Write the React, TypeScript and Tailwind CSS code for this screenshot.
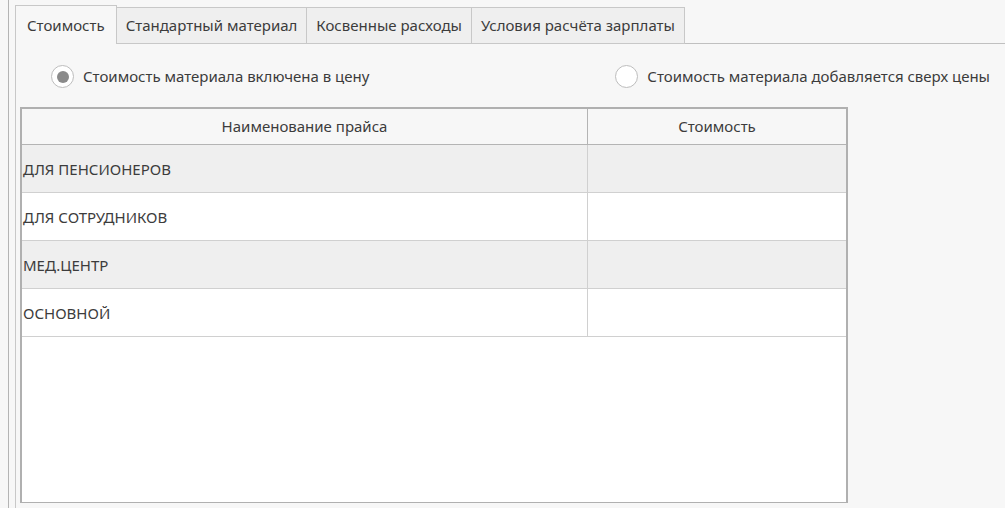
import React from 'react';

const tabs = ['Стоимость', 'Стандартный материал', 'Косвенные расходы', 'Условия расчёта зарплаты'];

const rows = ['ДЛЯ ПЕНСИОНЕРОВ', 'ДЛЯ СОТРУДНИКОВ', 'МЕД.ЦЕНТР', 'ОСНОВНОЙ'];

const Radio: React.FC<{ checked?: boolean; label: string }> = ({ checked, label }) => (
  <label className="flex items-center gap-[9px]">
    <span className="w-[23px] h-[23px] rounded-full border-[1.5px] border-[#bdbdbd] bg-white flex items-center justify-center">
      {checked && <span className="w-[12px] h-[12px] rounded-full bg-[#8a8a8a]" />}
    </span>
    <span>{label}</span>
  </label>
);

export default function App() {
  const active = 0;

  return (
    <div
      className="w-[1005px] h-[508px] bg-[#f7f7f7] text-[#3c3c3c] text-[15px] overflow-hidden pl-[8px]"
      style={{ fontFamily: '"Noto Sans", "Open Sans", sans-serif' }}
    >
      <div className="h-full border-l border-[#b4b4b4] pl-[6px] flex flex-col">
        {/* Tabs */}
        <div className="flex items-end h-[44px] shrink-0">
          {tabs.map((t, i) =>
            i === active ? (
              <div
                key={t}
                className="h-[39px] px-[11px] flex items-center border border-b-0 border-[#c8c8c8] bg-[#f7f7f7]"
              >
                {t}
              </div>
            ) : (
              <div
                key={t}
                className="h-[37px] px-[9px] flex items-center border border-l-0 border-[#c8c8c8] bg-[#efefef]"
              >
                {t}
              </div>
            )
          )}
          <div className="flex-1 border-b border-[#c0c0c0]" />
        </div>

        {/* Panel */}
        <div className="flex-1 border-l border-[#c8c8c8] flex flex-col">
          <div className="flex items-center justify-between h-[23px] mt-[21px] pl-[35px] pr-[15px]">
            <Radio checked label="Стоимость материала включена в цену" />
            <Radio label="Стоимость материала добавляется сверх цены" />
          </div>

          {/* Table */}
          <div className="ml-[4px] mt-[19px] w-[828px] h-[396px] border-2 border-b border-[#b0b0b0] bg-white flex flex-col">
            <div className="flex h-[36px] bg-[#f7f7f7] border-b border-[#b4b4b4] shrink-0">
              <div className="w-[566px] flex items-center justify-center border-r border-[#b4b4b4]">
                Наименование прайса
              </div>
              <div className="flex-1 flex items-center justify-center">Стоимость</div>
            </div>
            {rows.map((r, i) => (
              <div
                key={r}
                className={`flex h-[48px] border-b border-[#d0d0d0] shrink-0 ${i % 2 === 0 ? 'bg-[#efefef]' : 'bg-white'}`}
              >
                <div className="w-[566px] flex items-center pl-[1px] pt-[1px] border-r border-[#d0d0d0]">{r}</div>
                <div className="flex-1" />
              </div>
            ))}
          </div>
        </div>
      </div>
    </div>
  );
}
